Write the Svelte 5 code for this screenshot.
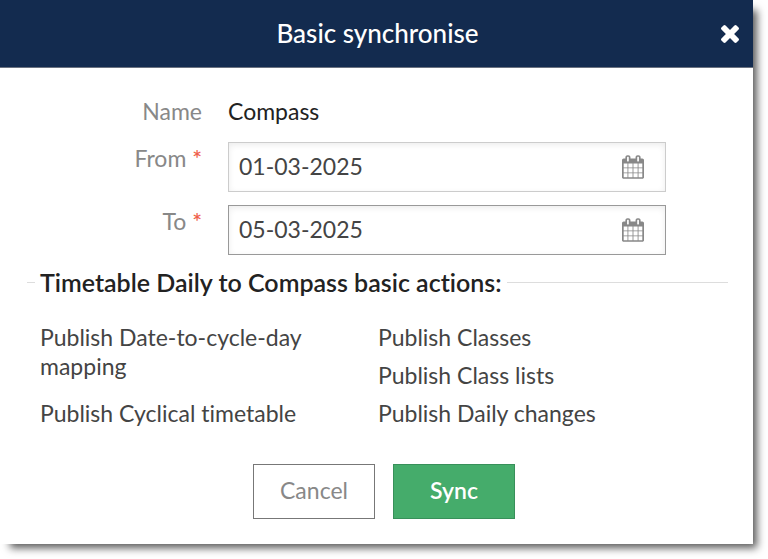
<script>
  let name = 'Compass';
  let from = '01-03-2025';
  let to = '05-03-2025';
</script>

<div class="dialog" role="dialog" aria-labelledby="sync-title">
  <header>
    <h1 id="sync-title">Basic synchronise</h1>
    <button type="button" class="close" aria-label="Close">
      <svg viewBox="302 366 1188 1188" width="18" height="18" aria-hidden="true">
        <path
          fill="currentColor"
          d="M1490 1322q0 40-28 68l-136 136q-28 28-68 28t-68-28l-294-294-294 294q-28 28-68 28t-68-28l-136-136q-28-28-28-68t28-68l294-294-294-294q-28-28-28-68t28-68l136-136q28-28 68-28t68 28l294 294 294-294q28-28 68-28t68 28l136 136q28 28 28 68t-28 68l-294 294 294 294q28 28 28 68z"
        />
      </svg>
    </button>
  </header>

  {#snippet calendar()}
    <svg viewBox="0 0 1664 1792" width="22" height="24" aria-hidden="true">
      <path
        fill="currentColor"
        d="M128 1664h288v-288h-288v288zM480 1664h320v-288h-320v288zM128 1312h288v-320h-288v320zM480 1312h320v-320h-320v320zM128 928h288v-288h-288v288zM864 1664h320v-288h-320v288zM480 928h320v-288h-320v288zM1248 1664h288v-288h-288v288zM864 1312h320v-320h-320v320zM512 448v-288q0-13-9.5-22.5t-22.5-9.5h-64q-13 0-22.5 9.5t-9.5 22.5v288q0 13 9.5 22.5t22.5 9.5h64q13 0 22.5-9.5t9.5-22.5zM1248 1312h288v-320h-288v320zM864 928h320v-288h-320v288zM1248 928h288v-288h-288v288zM1280 448v-288q0-13-9.5-22.5t-22.5-9.5h-64q-13 0-22.5 9.5t-9.5 22.5v288q0 13 9.5 22.5t22.5 9.5h64q13 0 22.5-9.5t9.5-22.5zM1664 384v1280q0 52-38 90t-90 38h-1408q-52 0-90-38t-38-90v-1280q0-52 38-90t90-38h128v-96q0-66 47-113t113-47h64q66 0 113 47t47 113v96h384v-96q0-66 47-113t113-47h64q66 0 113 47t47 113v96h128q52 0 90 38t38 90z"
      />
    </svg>
  {/snippet}

  <form on:submit|preventDefault>
    <div class="row">
      <span class="label">Name</span>
      <span class="value">{name}</span>
    </div>
    <div class="row">
      <label class="label" for="from">From <span class="required">*</span></label>
      <div class="field">
        <input id="from" type="text" bind:value={from} required />
        <button type="button" aria-label="Choose from date">{@render calendar()}</button>
      </div>
    </div>
    <div class="row">
      <label class="label" for="to">To <span class="required">*</span></label>
      <div class="field active">
        <input id="to" type="text" bind:value={to} required />
        <button type="button" aria-label="Choose to date">{@render calendar()}</button>
      </div>
    </div>

    <fieldset>
      <legend>Timetable Daily to Compass basic actions:</legend>
      <ul>
        <li class="tall">Publish Date-to-cycle-day mapping</li>
        <li>Publish Classes</li>
        <li>Publish Class lists</li>
        <li>Publish Cyclical timetable</li>
        <li>Publish Daily changes</li>
      </ul>
    </fieldset>

    <div class="buttons">
      <button type="button" class="cancel">Cancel</button>
      <button type="submit" class="sync">Sync</button>
    </div>
  </form>
</div>

<style>
  :global(body) {
    background: #fff;
  }

  .dialog {
    margin: 0 15px 15px 0;
    background: #fff;
    box-shadow: 7px 7px 8px -3px rgba(0, 0, 0, 0.65);
    color: #444;
    font-family: Lato, 'Open Sans', sans-serif;
    font-size: 23px;
    font-variant-ligatures: none;
    line-height: 29px;
  }

  button,
  input {
    box-sizing: border-box;
    border: 0;
    padding: 0;
    background: none;
    color: inherit;
    font: inherit;
  }

  button {
    cursor: pointer;
  }

  header {
    display: grid;
    grid-template-columns: 36px 1fr 36px;
    align-items: center;
    padding: 19px 5px 19px 7px;
    background: #132b4f;
    border-bottom: 1px solid #6b7280;
    color: #fff;
  }

  h1 {
    grid-column: 2;
    margin: 0;
    font-size: 26px;
    font-weight: 500;
    line-height: 29px;
    text-align: center;
  }

  .close {
    display: flex;
    justify-content: center;
    align-items: center;
  }

  form {
    padding: 29px 25px 25px 27px;
  }

  .row {
    display: grid;
    grid-template-columns: 175px 1fr;
    column-gap: 26px;
    margin-bottom: 13px;
    padding-right: 62px;
  }

  .row:first-child {
    margin-bottom: 16px;
  }

  .label {
    padding-top: 2px;
    color: #888;
    text-align: right;
  }

  .row:first-child .label {
    padding-top: 0;
  }

  .value {
    color: #222;
  }

  .required {
    color: #ef5f4c;
    font-weight: 600;
  }

  .field {
    display: flex;
    align-items: center;
    box-sizing: border-box;
    height: 50px;
    padding: 0 21px 0 10px;
    border: 1px solid #ccc;
    box-shadow: inset 0 2px 6px rgba(0, 0, 0, 0.08);
  }

  .field.active {
    border-color: #999;
  }

  .field input {
    flex: 1;
    min-width: 0;
    padding-bottom: 2px;
    outline: none;
  }

  .field button {
    display: flex;
    color: #888;
  }

  fieldset {
    margin: 0;
    padding: 26px 0 0 13px;
    border: 0;
    border-top: 1px solid #ddd;
  }

  legend {
    margin-left: -5px;
    padding: 0 5px;
    color: #222;
    font-size: 25px;
    font-weight: 600;
  }

  ul {
    display: grid;
    grid-template-columns: 290px 1fr;
    gap: 9px 48px;
    margin: 0;
    padding: 0;
    list-style: none;
  }

  .tall {
    grid-row: span 2;
  }

  .buttons {
    display: flex;
    justify-content: center;
    gap: 18px;
    margin-top: 36px;
    padding-left: 13px;
  }

  .buttons button {
    width: 122px;
    height: 55px;
    padding-bottom: 2px;
    border: 1px solid #777;
  }

  .cancel {
    color: #888;
  }

  .buttons .sync {
    background: #45ac6b;
    border-color: #38905a;
    color: #fff;
    font-weight: 600;
  }
</style>
